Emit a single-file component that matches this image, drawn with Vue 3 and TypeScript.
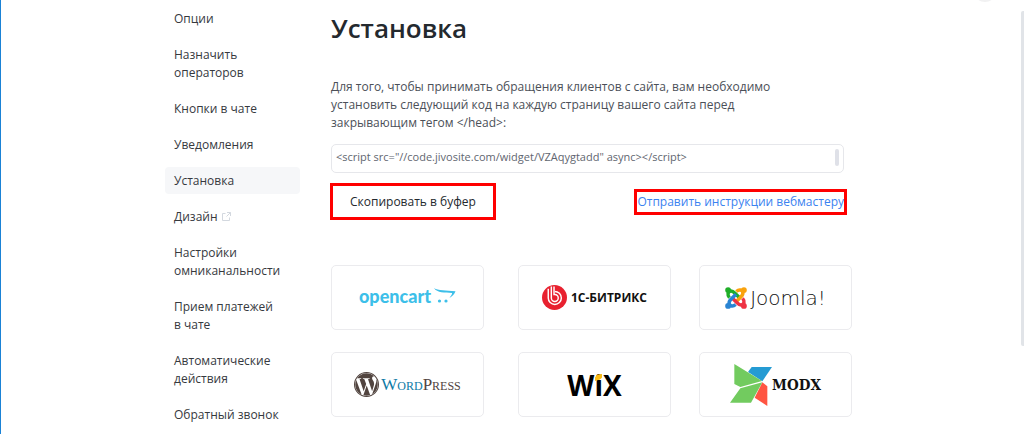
<script setup lang="ts">
import { ref } from 'vue'

interface MenuItem {
  label: string
  active?: boolean
  external?: boolean
}

const menu: MenuItem[] = [
  { label: 'Опции' },
  { label: 'Назначить операторов' },
  { label: 'Кнопки в чате' },
  { label: 'Уведомления' },
  { label: 'Установка', active: true },
  { label: 'Дизайн', external: true },
  { label: 'Настройки омниканальности' },
  { label: 'Прием платежей в\u00a0чате' },
  { label: 'Автоматические действия' },
  { label: 'Обратный звонок' },
]

const code = ref('<script src="//code.jivosite.com/widget/VZAqygtadd" async><\/script>')

function copyCode(): void {
  void navigator.clipboard?.writeText(code.value)
}
</script>

<template>
  <div class="page">
    <span class="avatar" aria-hidden="true"></span>
    <span class="page-thumb" aria-hidden="true"></span>

    <nav class="sidebar" aria-label="Настройки">
      <a
        v-for="item in menu"
        :key="item.label"
        href="#"
        class="item"
        :class="{ active: item.active }"
        :aria-current="item.active ? 'page' : undefined"
      >{{ item.label }}<svg v-if="item.external" class="ext" viewBox="0 0 9 9" aria-hidden="true">
        <path d="M3.5 1.5H.5v7h7v-3M5 .5h3.5V4M8.5.5l-4 4" />
      </svg></a>
    </nav>

    <main class="content">
      <h1>Установка</h1>
      <label class="intro" for="code">Для того, чтобы принимать обращения клиентов с сайта, вам необходимо установить следующий код на каждую страницу вашего сайта перед закрывающим тегом &lt;/head&gt;:</label>

      <div class="code-box">
        <textarea id="code" v-model="code" rows="1" readonly spellcheck="false"></textarea>
        <span class="code-thumb" aria-hidden="true"></span>
      </div>

      <div class="actions">
        <button type="button" class="copy" @click="copyCode">Скопировать в буфер</button>
        <a href="#" class="send">Отправить инструкции вебмастеру</a>
      </div>

      <div class="platforms">
        <a href="#" class="card opencart">
          <span>opencart</span>
          <svg width="22" height="16" viewBox="0 0 22 16" aria-hidden="true">
            <path d="M0 0C4 3 12 2.200 21.500 3.200C20.500 6 18.500 8 15.500 10C17 7.500 18.500 6 18 5C11 4.600 3 5 0 0Z" />
            <circle cx="5.500" cy="13" r="1.600" /><circle cx="12" cy="13" r="1.600" />
          </svg>
        </a>

        <a href="#" class="card bitrix">
          <svg width="25" height="25" viewBox="0 0 26 26" aria-hidden="true">
            <circle cx="13" cy="13" r="13" fill="#e8212f" />
            <g fill="none" stroke="#fff" stroke-width="1.500">
              <path d="M6.500 4V13.500A6.800 6.800 0 1 0 13.300 6.700" />
              <path d="M9.700 1.500V13.500A3.600 3.600 0 1 0 13.300 9.900H12.500V1.500" />
            </g>
          </svg>
          <span>1С-БИТРИКС</span>
        </a>

        <a href="#" class="card joomla">
          <svg width="22" height="22" viewBox="0 0 64 64" aria-hidden="true">
            <g v-for="(color, i) in ['#1fae28', '#f9a20d', '#ee3344', '#2a84d2']" :key="color" :transform="`rotate(${i * 90} 32 32)`">
              <circle cx="9" cy="9" r="8.500" :fill="color" />
              <path d="M13 31C6 23 8 14 16 12C21 11 25 14 29 18L43 32" fill="none" :stroke="color" stroke-width="10" />
            </g>
          </svg>
          <span>Joomla!</span>
        </a>

        <a href="#" class="card wordpress">
          <svg width="25" height="25" viewBox="0 0 24 24" aria-hidden="true">
            <circle cx="12" cy="12" r="11.500" fill="none" stroke="#51443f" />
            <path fill="#51443f" d="M21.469 6.825c.84 1.537 1.318 3.300 1.318 5.175 0 3.979-2.156 7.456-5.363 9.325l3.295-9.527c.615-1.540.820-2.771.820-3.864 0-.405-.026-.780-.070-1.110m-7.981.105c.647-.030 1.232-.105 1.232-.105.582-.075.514-.930-.067-.899 0 0-1.755.135-2.880.135-1.064 0-2.850-.150-2.850-.150-.585-.030-.661.855-.075.885 0 0 .540.061 1.125.090l1.680 4.605-2.370 7.080L5.354 6.900c.649-.030 1.234-.100 1.234-.100.585-.075.516-.930-.065-.896 0 0-1.746.138-2.874.138-.200 0-.438-.008-.690-.015C4.911 3.150 8.235 1.215 12 1.215c2.809 0 5.365 1.072 7.286 2.833-.046-.003-.091-.009-.141-.009-1.060 0-1.812.923-1.812 1.914 0 .890.513 1.643 1.060 2.531.411.720.890 1.643.890 2.977 0 .915-.354 1.994-.821 3.479l-1.075 3.585-3.900-11.610zM12 22.784c-1.059 0-2.081-.153-3.048-.437l3.237-9.406 3.315 9.087c.024.053.050.101.078.149-1.120.393-2.325.609-3.582.609M1.211 12c0-1.564.336-3.050.935-4.390L7.290 21.709C3.694 19.960 1.212 16.271 1.211 12" />
          </svg>
          <span><b>Word</b>Press</span>
        </a>

        <a href="#" class="card wix">
          <span>W<span class="wix-i">i<svg viewBox="0 0 6 6" aria-hidden="true"><path d="M0 6V3C1 1 3 0 6 0V3C5 5 3 5 0 6Z" /></svg></span>X</span>
        </a>

        <a href="#" class="card modx">
          <svg width="42" height="42" viewBox="102 48 126 126" aria-hidden="true">
            <path fill="#259bd3" d="M167 57H228L199 100L156 72Z" />
            <path fill="#ff5542" d="M199 103L214 115V174L176 149Z" />
            <path fill="#72cb5f" d="M115 48L198 99L133 117L115 108ZM133 121L199 103L165 164H102Z" />
          </svg>
          <span>MODX</span>
        </a>
      </div>
    </main>
  </div>
</template>

<style>
body {
  margin: 0;
  background: #fff;
}
</style>

<style scoped>
.page {
  position: relative;
  box-sizing: border-box;
  display: flex;
  gap: 31px;
  height: 100vh;
  overflow: hidden;
  padding: 5px 20px 0 164px;
  border-left: 1px solid #1a82d6;
  font-family: "Open Sans", "Noto Sans", sans-serif;
  font-size: 12px;
  line-height: 18px;
  color: #36393e;
}

.avatar {
  position: absolute;
  top: -22px;
  right: 27px;
  width: 24px;
  height: 24px;
  border-radius: 50%;
  background: #f1f1f2;
}

.page-thumb {
  position: absolute;
  top: 11px;
  right: 0;
  width: 3px;
  height: 335px;
  border-radius: 2px 0 0 2px;
  background: #e1e4e8;
}

.sidebar {
  flex: 0 0 135px;
  display: flex;
  flex-direction: column;
  gap: 9px;
}

.item {
  padding: 5px 9px 4px;
  border-radius: 4px;
  color: inherit;
  text-decoration: none;
}

.item.active {
  background: #f6f7f9;
}

.ext {
  width: 9px;
  height: 9px;
  margin-left: 4px;
  fill: none;
  stroke: #d3d8df;
}

.content {
  flex: 1;
  max-width: 521px;
}

h1 {
  margin: 5px 0 31px;
  font-size: 26px;
  line-height: 37px;
  font-weight: 600;
  color: #24292e;
}

.intro {
  display: block;
  max-width: 450px;
  color: #4b5058;
}

.code-box {
  position: relative;
  margin: 12px 8px 11px 0;
}

textarea {
  display: block;
  box-sizing: border-box;
  width: 100%;
  height: 29px;
  padding: 3px 4px;
  overflow: hidden;
  resize: none;
  border: 1px solid #e6e7eb;
  border-radius: 5px;
  background: #fff;
  font: 11px/18px "Open Sans", "Noto Sans", sans-serif;
  color: #5f6670;
}

.code-thumb {
  position: absolute;
  top: 5px;
  right: 5px;
  width: 4px;
  height: 17px;
  border-radius: 2px;
  background: #dfe1e8;
}

.actions {
  display: flex;
  justify-content: space-between;
  align-items: center;
  margin: 0 8px 46px 0;
}

.copy {
  height: 35px;
  padding: 0 19px;
  border: 0;
  outline: 3px solid #f00;
  outline-offset: -2px;
  background: #fff;
  font: inherit;
  font-weight: 500;
  color: #24292e;
}

.send {
  line-height: 20px;
  outline: 3px solid #f00;
  color: #3b82f0;
  text-decoration: none;
}

.platforms {
  display: grid;
  grid-template-columns: 187fr 181fr 153fr;
  row-gap: 22px;
}

.card {
  box-sizing: border-box;
  display: flex;
  align-items: center;
  justify-content: center;
  width: 153px;
  height: 65px;
  border: 1px solid #ebebee;
  border-radius: 5px;
  color: #111;
  text-decoration: none;
}

.opencart {
  gap: 3px;
  padding-bottom: 4px;
  font: 900 18px/20px Lato, sans-serif;
  color: #3dbfe9;
}

.opencart svg {
  fill: #3dbfe9;
}

.bitrix {
  gap: 4px;
  font: 700 12px/20px "Open Sans", sans-serif;
}

.joomla {
  gap: 3px;
  font: 200 20px/20px "DejaVu Sans Light", "DejaVu Sans", sans-serif;
}

.wordpress {
  gap: 2px;
  font: 17px/20px "Liberation Serif", serif;
  font-variant: small-caps;
  color: #51443f;
}

.wordpress b {
  font-weight: inherit;
  color: #0e7ba6;
}

.wix {
  font: 700 28px/32px "Open Sans", sans-serif;
  color: #000;
}

.wix-i {
  position: relative;
}

.wix-i svg {
  position: absolute;
  top: 8px;
  left: 1px;
  width: 7px;
  height: 7px;
  fill: #fbbd16;
}

.modx {
  font: 700 15px/20px "DejaVu Serif Condensed", "DejaVu Serif", serif;
}
</style>
